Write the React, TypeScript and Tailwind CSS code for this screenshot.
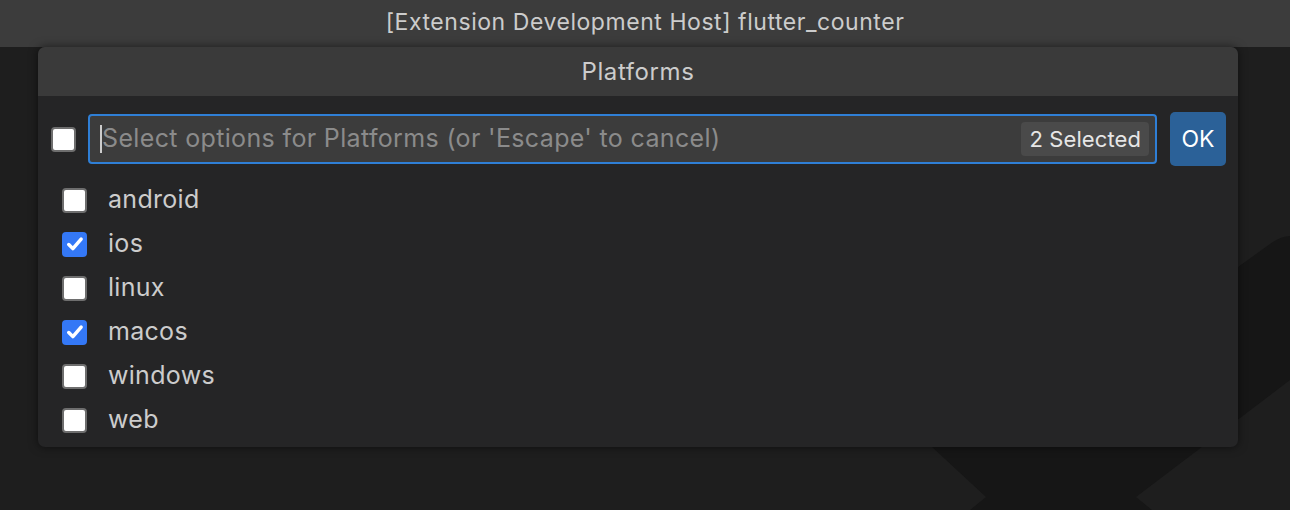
import React from 'react';

const OPTIONS = [
  { label: 'android', checked: false },
  { label: 'ios', checked: true },
  { label: 'linux', checked: false },
  { label: 'macos', checked: true },
  { label: 'windows', checked: false },
  { label: 'web', checked: false },
];

function Checkbox({ checked }: { checked: boolean }) {
  if (checked) {
    return (
      <div className="w-[25px] h-[25px] rounded-[4px] bg-[#3478f6] flex items-center justify-center shrink-0">
        <svg viewBox="0 0 16 16" className="w-[20px] h-[20px]" fill="none">
          <path d="M3 8.4l3.3 3.3 6.6-7.6" stroke="#fff" strokeWidth="2.8" strokeLinecap="round" strokeLinejoin="round" />
        </svg>
      </div>
    );
  }
  return <div className="w-[25px] h-[25px] rounded-[4px] bg-white border-2 border-[#6e6e6e] shrink-0" />;
}

export default function App() {
  return (
    <div
      className="relative w-[1290px] h-[510px] bg-[#1e1e1e] overflow-hidden"
      style={{ fontFamily: 'Inter, "Noto Sans", sans-serif' }}
    >
      {/* watermark logo */}
      <svg className="absolute inset-0" width="1290" height="510" viewBox="0 0 1290 510">
        <path
          d="M1238 267 L1270 244 Q1281 236 1290 236 L1290 380 L1136 497 L1152 510 L970 510 L986 497 L932 447 L932 267 Z"
          fill="#161616"
        />
      </svg>

      <div className="relative h-[47px] bg-[#3c3c3c] flex items-center justify-center text-[#cccccc] text-[23px] tracking-[0.55px] pb-[2px]">
        [Extension Development Host] flutter_counter
      </div>

      <div className="relative ml-[38px] w-[1200px] rounded-[7px] overflow-hidden bg-[#252526] shadow-[0_0_10px_rgba(0,0,0,0.55)]">
        <div className="h-[49px] bg-[#3a3a3a] flex items-center justify-center text-[#cccccc] text-[24px] tracking-[0.6px]">
          Platforms
        </div>

        <div className="flex items-center pl-[13px] pr-[12px] pt-[16px]">
          <Checkbox checked={false} />
          <div className="ml-[12px] flex-1 h-[50px] rounded-[4px] border-2 border-[#2f7fd6] bg-[#3c3c3c] flex items-center pl-[10px] pr-[6px]">
            <div className="w-[2px] h-[28px] bg-[#cccccc]" />
            <span className="flex-1 text-[#8b8b8b] text-[25px] tracking-[0.35px]">
              Select options for Platforms (or 'Escape' to cancel)
            </span>
            <span className="h-[34px] px-[8px] rounded-[4px] bg-[#4a4a4a] text-[#e6e6e6] text-[22px] tracking-[0.1px] flex items-center">
              2 Selected
            </span>
          </div>
          <button className="ml-[13px] w-[56px] h-[54px] rounded-[5px] bg-[#2b6198] text-white text-[23px] flex items-center justify-center">
            OK
          </button>
        </div>

        <div className="pt-[12px] pb-[5px]">
          {OPTIONS.map(o => (
            <div key={o.label} className="h-[44px] flex items-center pl-[24px]">
              <Checkbox checked={o.checked} />
              <span className="ml-[21px] text-[#cccccc] text-[25px] tracking-[0.3px]">{o.label}</span>
            </div>
          ))}
        </div>
      </div>
    </div>
  );
}
